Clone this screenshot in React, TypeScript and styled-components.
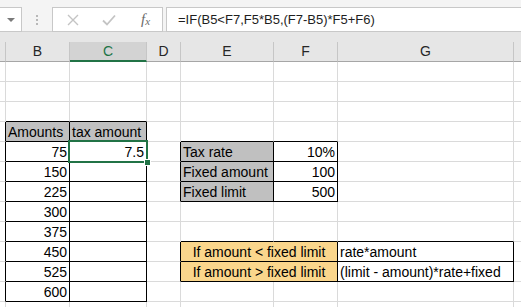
import React from "react";
import styled, { createGlobalStyle } from "styled-components";

const GlobalStyle = createGlobalStyle`
  html, body {
    margin: 0;
    padding: 0;
    background: #ffffff;
    overflow: hidden;
  }
  body {
    font-family: "Liberation Sans", Arial, sans-serif;
  }
`;

const GREEN = "#217346";
const GRID = "#dadada";

// column letters and pixel widths (including the 1px right border);
// A and H are only slivers at the window edges, so their letters stay hidden
const columns = [
  { name: "A", width: 6, label: false },
  { name: "B", width: 64, label: true },
  { name: "C", width: 77, label: true },
  { name: "D", width: 34, label: true },
  { name: "E", width: 93, label: true },
  { name: "F", width: 64, label: true },
  { name: "G", width: 176, label: true },
  { name: "H", width: 64, label: false },
];

type CellSpec = {
  text?: string;
  align?: "left" | "right" | "center";
  fill?: string;
  boxed?: boolean;
  span?: number;
};

const GREY = "#c0c0c0";
const GOLD = "#fad68c";

const cells: Record<string, CellSpec> = {
  B4: { text: "Amounts", fill: GREY, boxed: true },
  C4: { text: "tax amount", fill: GREY, boxed: true },
  B5: { text: "75", align: "right", boxed: true },
  C5: { text: "7.5", align: "right", boxed: true },
  B6: { text: "150", align: "right", boxed: true },
  B7: { text: "225", align: "right", boxed: true },
  B8: { text: "300", align: "right", boxed: true },
  B9: { text: "375", align: "right", boxed: true },
  B10: { text: "450", align: "right", boxed: true },
  B11: { text: "525", align: "right", boxed: true },
  B12: { text: "600", align: "right", boxed: true },
  E5: { text: "Tax rate", fill: GREY, boxed: true },
  F5: { text: "10%", align: "right", boxed: true },
  E6: { text: "Fixed amount", fill: GREY, boxed: true },
  F6: { text: "100", align: "right", boxed: true },
  E7: { text: "Fixed limit", fill: GREY, boxed: true },
  F7: { text: "500", align: "right", boxed: true },
  E10: { text: "If amount < fixed limit", align: "center", fill: GOLD, boxed: true, span: 2 },
  G10: { text: "rate*amount", boxed: true },
  E11: { text: "If amount > fixed limit", align: "center", fill: GOLD, boxed: true, span: 2 },
  G11: { text: "(limit - amount)*rate+fixed", boxed: true },
};
// empty boxed cells in the tax amount column
for (let r = 6; r <= 12; r++) cells["C" + r] = { boxed: true };

const ROWS = 13;
const selected = "C5";

// find the cell (possibly merged) covering a column at a row
function owner(row: number, col: number): CellSpec | undefined {
  for (let c = col; c >= 0; c--) {
    const spec = cells[columns[c].name + row];
    if (spec) return c + (spec.span || 1) > col ? spec : undefined;
  }
  return undefined;
}
const boxed = (row: number, col: number) =>
  col < columns.length && row <= ROWS && !!owner(row, col)?.boxed;

export default function App() {
  const rows: React.ReactNode[] = [];
  for (let r = 1; r <= ROWS; r++) {
    for (let c = 0; c < columns.length; c++) {
      const key = columns[c].name + r;
      const spec = cells[key];
      const covered = !spec && owner(r, c);
      if (covered) continue;
      const span = spec?.span || 1;
      const last = c + span - 1;
      let blackBottom = false;
      for (let k = c; k <= last; k++) if (boxed(r, k) || boxed(r + 1, k)) blackBottom = true;
      const blackRight = boxed(r, last) || boxed(r, last + 1);
      rows.push(
        <Cell
          key={key}
          $span={span}
          $align={spec?.align || "left"}
          $fill={spec?.fill}
          $right={blackRight ? "#000" : GRID}
          $bottom={blackBottom ? "#000" : GRID}
        >
          {spec?.text}
          {key === selected && (
            <Selection>
              <Handle />
            </Selection>
          )}
        </Cell>
      );
    }
  }

  return (
    <>
      <GlobalStyle />
      <Window>
        <FormulaBar>
          <NameBox>
            <DropArrow />
          </NameBox>
          <Grip>
            <span />
            <span />
            <span />
          </Grip>
          <ButtonBox>
            <svg width="12" height="12" viewBox="0 0 12 12">
              <path d="M1 1 L11 11 M11 1 L1 11" stroke="#c4c4c4" strokeWidth="1.4" fill="none" />
            </svg>
            <svg width="14" height="12" viewBox="0 0 14 12">
              <path d="M1 6.5 L5 10.5 L13 1.5" stroke="#c4c4c4" strokeWidth="1.8" fill="none" />
            </svg>
            <Fx>
              f<sub>x</sub>
            </Fx>
          </ButtonBox>
          <FormulaBox>=IF(B5&lt;F7,F5*B5,(F7-B5)*F5+F6)</FormulaBox>
        </FormulaBar>
        <Gap />
        <Sheet>
          {columns.map((col) => (
            <ColHeader key={col.name} $active={col.name === "C"}>
              {col.label ? col.name : ""}
            </ColHeader>
          ))}
          {rows}
        </Sheet>
      </Window>
    </>
  );
}

const Window = styled.div`
  width: 521px;
  height: 307px;
  overflow: hidden;
  background: #ffffff;
`;

const FormulaBar = styled.div`
  height: 32px;
  box-sizing: border-box;
  padding-top: 7px;
  background: #f4f4f4;
  border-bottom: 1px solid #d0d0d0;
  display: flex;
  align-items: stretch;
`;

const NameBox = styled.div`
  width: 23px;
  height: 25px;
  box-sizing: border-box;
  margin-left: -1px;
  background: #ffffff;
  border: 1px solid #c8c8c8;
  display: flex;
  align-items: center;
  justify-content: center;
`;

const DropArrow = styled.div`
  width: 0;
  height: 0;
  border-left: 4px solid transparent;
  border-right: 4px solid transparent;
  border-top: 4px solid #7a7a7a;
`;

const Grip = styled.div`
  width: 30px;
  height: 25px;
  display: flex;
  flex-direction: column;
  align-items: center;
  justify-content: center;
  gap: 2px;
  span {
    width: 2px;
    height: 2px;
    background: #b8b8b8;
  }
`;

const ButtonBox = styled.div`
  width: 111px;
  height: 25px;
  box-sizing: border-box;
  background: #ffffff;
  border: 1px solid #c8c8c8;
  display: flex;
  align-items: center;
  padding-left: 14px;
  gap: 23px;
`;

const Fx = styled.span`
  font-family: "Liberation Serif", "Times New Roman", serif;
  font-style: italic;
  font-size: 15px;
  color: #6a6a6a;
  margin-left: 2px;
  sub {
    font-size: 11px;
    vertical-align: -1px;
  }
`;

const FormulaBox = styled.div`
  flex: 1;
  height: 25px;
  box-sizing: border-box;
  margin-left: 3px;
  margin-right: -2px;
  background: #ffffff;
  border: 1px solid #c8c8c8;
  padding-left: 11px;
  font-size: 13px;
  line-height: 23px;
  color: #1e1e1e;
  white-space: nowrap;
`;

const Gap = styled.div`
  height: 10px;
  background: #e6e6e6;
`;

const Sheet = styled.div`
  display: grid;
  grid-template-columns: ${columns.map((c) => c.width + "px").join(" ")};
  grid-auto-rows: 20px;
`;

const ColHeader = styled.div<{ $active: boolean }>`
  box-sizing: border-box;
  background: ${(p) => (p.$active ? "#d3d3d3" : "#e6e6e6")};
  border-right: 1px solid #c6c6c6;
  border-bottom: ${(p) => (p.$active ? `2px solid ${GREEN}` : "1px solid #a6a6a6")};
  color: ${(p) => (p.$active ? GREEN : "#262626")};
  font-size: 14px;
  line-height: 19px;
  text-align: center;
`;

const Cell = styled.div<{
  $span: number;
  $align: string;
  $fill?: string;
  $right: string;
  $bottom: string;
}>`
  position: relative;
  grid-column: span ${(p) => p.$span};
  box-sizing: border-box;
  background: ${(p) => p.$fill || "#ffffff"};
  border-right: 1px solid ${(p) => p.$right};
  border-bottom: 1px solid ${(p) => p.$bottom};
  padding: 0 2px;
  font-size: 14px;
  line-height: 20px;
  color: #000;
  text-align: ${(p) => p.$align};
  white-space: nowrap;
`;

const Selection = styled.div`
  position: absolute;
  z-index: 2;
  top: -2px;
  left: -2px;
  right: -2px;
  bottom: -2px;
  border: 2px solid ${GREEN};
  pointer-events: none;
`;

const Handle = styled.div`
  position: absolute;
  right: -5px;
  bottom: -5px;
  width: 5px;
  height: 5px;
  background: ${GREEN};
  border: 1px solid #ffffff;
`;
